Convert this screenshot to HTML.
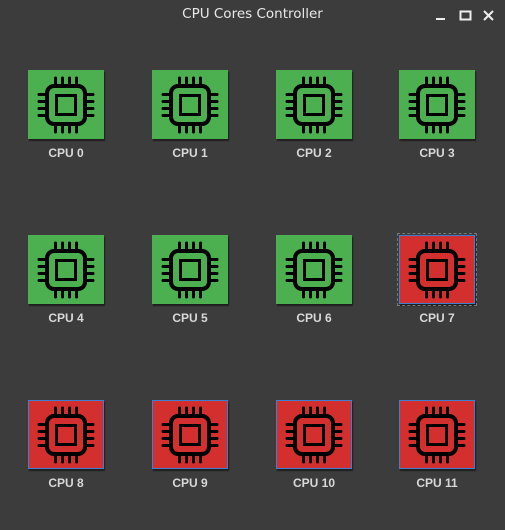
<!DOCTYPE html>
<html><head><style>
body{margin:0;width:505px;height:530px;background:#3c3c3c;font-family:"Liberation Sans",sans-serif;position:relative;overflow:hidden}
.title{position:absolute;top:6px;left:0;width:505px;text-align:center;color:#e8e8e8;font-size:14px;font-family:"DejaVu Sans",sans-serif;font-size:13.5px}
.b{position:absolute;width:76px;height:69px;box-shadow:1px 2px 1px #1e1e1e;box-sizing:border-box}
.g{background:#4caf50}.r{background:#d32f2f;border:1px solid #3d7fd0}
.b svg{position:absolute;left:6px;top:2.5px}
.r svg{left:5px;top:1.5px}
.f{outline:1px dashed #777;outline-offset:1px}
.l{position:absolute;width:100px;text-align:center;color:#d8d8d8;font-weight:bold;font-size:12px}
</style></head><body>
<div class="title">CPU Cores Controller</div>
<svg style="position:absolute;left:430px;top:8px" width="70" height="16">
<rect x="6" y="10" width="9" height="2" fill="#eee"/>
<rect x="30.5" y="3.5" width="10" height="8" fill="none" stroke="#eee" stroke-width="2"/>
<path d="M54 3L63 12M63 3L54 12" stroke="#eee" stroke-width="2"/>
</svg>
<svg width="0" height="0" style="position:absolute"><defs><g id="chip" fill="none" stroke="#000" stroke-linecap="round">
<rect x="13" y="13" width="38" height="38" rx="7" stroke-width="4"/>
<rect x="22.5" y="22.5" width="19" height="19" stroke-width="3"/>
<path stroke-width="3" d="M21.5 11V5M28.5 11V5M35.5 11V5M42.5 11V5M21.5 53V59M28.5 53V59M35.5 53V59M42.5 53V59M11 21.5H5M11 28.5H5M11 35.5H5M11 42.5H5M53 21.5H59M53 28.5H59M53 35.5H59M53 42.5H59"/>
</g></defs></svg>
<div id="c"></div>
<script>
var xs=[28,152,276,399],ys=[70,235,400],h='';
for(var i=0;i<12;i++){var x=xs[i%4],y=ys[Math.floor(i/4)],c=i<7?'g':'r';if(i==7)c+=' f';
h+='<div class="b '+c+'" style="left:'+x+'px;top:'+y+'px"><svg width="64" height="64"><use href="#chip"/></svg></div>';
h+='<div class="l" style="left:'+(x-12)+'px;top:'+(y+76)+'px">CPU '+i+'</div>';}
document.getElementById('c').innerHTML=h;
</script>
</body></html>
